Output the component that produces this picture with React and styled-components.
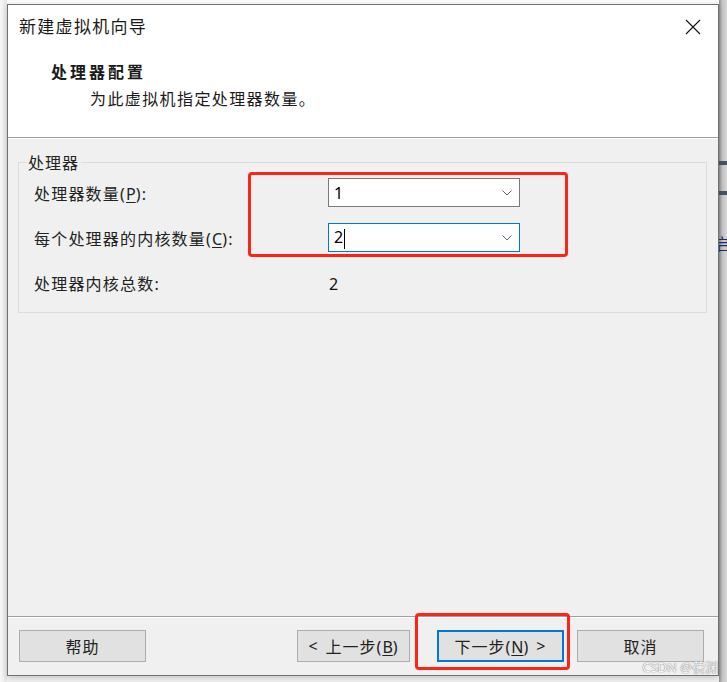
import React from 'react';
import styled, { createGlobalStyle } from 'styled-components';

const GlobalStyle = createGlobalStyle`
  *, *::before, *::after {
    box-sizing: border-box;
  }
  html, body {
    margin: 0;
    padding: 0;
    background: #f7f7f7;
  }
  body {
    font-family: "Noto Sans", "Noto Sans CJK SC", sans-serif;
    color: #1a1a1a;
  }
`;

const Screen = styled.div`
  width: 727px;
  height: 682px;
  display: flex;
  overflow: hidden;
  position: relative;
  background: linear-gradient(#fbfbfb, #f2f2f2);
`;

const Gutter = styled.div`
  flex: 0 0 7px;
  background: linear-gradient(90deg, #f8f8f8, #e6e6e6);
`;

const Dialog = styled.div`
  flex: 0 0 712px;
  margin-top: 4px;
  height: 672px;
  border: 1px solid #707070;
  background: #f0f0f0;
  display: flex;
  flex-direction: column;
  box-shadow: 0 2px 6px rgba(0, 0, 0, 0.18);
  position: relative;
  z-index: 1;
`;

const BackWindow = styled.div`
  flex: 1;
  min-width: 0;
  overflow: hidden;
  background: linear-gradient(90deg, #8f8f8f, #c4c4c4 40%, #d6d6d6);
  display: flex;
  flex-direction: column;
  padding-top: 161px;
  gap: 26px;
`;

const BackBar = styled.div`
  height: 4px;
  background: #46525d;
`;

const BackGlyph = styled.div`
  margin-top: 13px;
  margin-left: -5px;
  font-size: 16px;
  line-height: 18px;
  color: #1c2a70;
  font-family: "Noto Sans CJK SC", sans-serif;
`;

const Header = styled.div`
  background: #fff;
  height: 133px;
  border-bottom: 1px solid #a0a0a0;
  box-shadow: 0 1px 0 #fff;
  display: flex;
  flex-direction: column;
`;

const TitleBar = styled.div`
  height: 42px;
  display: flex;
  align-items: center;
  justify-content: space-between;
  padding: 0 16px 0 11px;
`;

const Title = styled.div`
  font-family: "Noto Sans CJK SC", sans-serif;
  font-size: 17px;
  line-height: 20px;
  letter-spacing: 1.3px;
`;

const CloseButton = styled.div`
  width: 18px;
  height: 18px;
  display: flex;
  align-items: center;
  justify-content: center;
  margin-top: 2px;
`;

const HeaderText = styled.div`
  padding: 16px 0 0 43px;
  display: flex;
  flex-direction: column;
  gap: 10px;
`;

const HeaderTitle = styled.div`
  font-family: "Noto Sans CJK SC", sans-serif;
  font-weight: 700;
  font-size: 16px;
  line-height: 17px;
  letter-spacing: 3px;
`;

const HeaderSub = styled.div`
  font-family: "Noto Sans CJK SC", sans-serif;
  font-size: 16px;
  line-height: 17px;
  letter-spacing: 1.4px;
  padding-left: 39px;
`;

const Body = styled.div`
  flex: 1;
  padding: 16px 11px 0 10px;
`;

const Group = styled.fieldset`
  position: relative;
  margin: 0;
  border: 1px solid #dcdcdc;
  height: 159px;
  padding: 7px 0 0 15px;
`;

const Legend = styled.legend`
  font-family: "Noto Sans CJK SC", sans-serif;
  font-size: 16px;
  line-height: 17px;
  letter-spacing: 1px;
  padding: 0 2px 0 1px;
  margin-left: -7px;
  color: #222;
`;

const Rows = styled.div`
  display: grid;
  grid-template-columns: 294px 192px;
  grid-auto-rows: 29px;
  row-gap: 16px;
  align-items: center;
`;

const Label = styled.div`
  font-family: "Noto Sans", "Noto Sans CJK SC", sans-serif;
  font-size: 16px;
  line-height: 17px;
  letter-spacing: 1.2px;
  color: #222;
  white-space: nowrap;
  padding-top: 4px;
`;

const Key = styled.span`
  text-decoration: underline;
  text-underline-offset: 2px;
  letter-spacing: 0;
`;

const Combo = styled.div`
  height: 29px;
  background: #fff;
  border: 1px solid ${p => (p.$focused ? '#0078d7' : '#7a7a7a')};
  display: flex;
  align-items: center;
  justify-content: space-between;
  padding: 0 7px 0 5px;
  font-family: "Noto Sans", sans-serif;
  font-size: 16px;
  color: #000;
`;

const Caret = styled.span`
  display: inline-block;
  width: 1px;
  height: 20px;
  background: #000;
  margin-left: 1px;
  vertical-align: middle;
`;

const Value = styled.div`
  font-family: "Noto Sans", sans-serif;
  font-size: 16px;
  padding: 2px 0 0 1px;
  color: #111;
`;

const Highlight = styled.div`
  position: absolute;
  border: 3px solid #ff2217;
  border-radius: 4px;
  pointer-events: none;
`;

const Footer = styled.div`
  height: 59px;
  border-top: 1px solid #a0a0a0;
  box-shadow: inset 0 1px 0 #fff;
  display: flex;
  align-items: flex-start;
  padding: 13px 13px 0 11px;
  position: relative;
`;

const Button = styled.div`
  height: 32px;
  width: ${p => p.$w || 127}px;
  margin-left: ${p => p.$ml || 0}px;
  background: #e1e1e1;
  border: ${p => (p.$primary ? '2px solid #0078d7' : '1px solid #adadad')};
  display: flex;
  align-items: center;
  justify-content: center;
  font-family: "Noto Sans", "Noto Sans CJK SC", sans-serif;
  font-size: 16px;
  letter-spacing: 1px;
  color: #222;
  gap: 7px;
`;

const Watermark = styled.div`
  position: absolute;
  right: 9px;
  bottom: 6px;
  font-family: "Noto Sans", "Noto Sans CJK SC", sans-serif;
  font-size: 13px;
  color: #f6f6f6;
  text-shadow: 0 0 1px #8a8a8a, 0 0 1px #8a8a8a;
  z-index: 2;
`;

const Chevron = () => (
  <svg width="10" height="6" viewBox="0 0 10 6">
    <path d="M0.5 0.5 L5 5 L9.5 0.5" fill="none" stroke="#666" strokeWidth="1" />
  </svg>
);

const CloseIcon = () => (
  <svg width="16" height="16" viewBox="0 0 16 16">
    <path d="M1 1 L15 15 M15 1 L1 15" stroke="#111" strokeWidth="1.1" />
  </svg>
);

const App = () => {
  return (
    <>
      <GlobalStyle />
      <Screen>
        <Gutter />
        <Dialog>
          <Header>
            <TitleBar>
              <Title>新建虚拟机向导</Title>
              <CloseButton>
                <CloseIcon />
              </CloseButton>
            </TitleBar>
            <HeaderText>
              <HeaderTitle>处理器配置</HeaderTitle>
              <HeaderSub>为此虚拟机指定处理器数量。</HeaderSub>
            </HeaderText>
          </Header>
          <Body>
            <Group>
              <Legend>处理器</Legend>
              <Rows>
                <Label>
                  处理器数量(<Key>P</Key>):
                </Label>
                <Combo>
                  <span>1</span>
                  <Chevron />
                </Combo>
                <Label>
                  每个处理器的内核数量(<Key>C</Key>):
                </Label>
                <Combo $focused>
                  <span>
                    2<Caret />
                  </span>
                  <Chevron />
                </Combo>
                <Label>处理器内核总数:</Label>
                <Value>2</Value>
              </Rows>
              <Highlight style={{ left: 229, top: 1, width: 320, height: 85 }} />
            </Group>
          </Body>
          <Footer>
            <Button>帮助</Button>
            <Button $w={113} $ml={151}>
              <span>&lt;</span>
              <span>
                上一步(<Key>B</Key>)
              </span>
            </Button>
            <Button $ml={27} $primary>
              <span>
                下一步(<Key>N</Key>)
              </span>
              <span>&gt;</span>
            </Button>
            <Button $ml={13}>取消</Button>
            <Highlight style={{ left: 407, top: -4, width: 155, height: 57 }} />
          </Footer>
        </Dialog>
        <BackWindow>
          <BackBar />
          <BackBar />
          <BackGlyph>启</BackGlyph>
        </BackWindow>
        <Watermark>CSDN @蒨渊</Watermark>
      </Screen>
    </>
  );
};

export default App;
